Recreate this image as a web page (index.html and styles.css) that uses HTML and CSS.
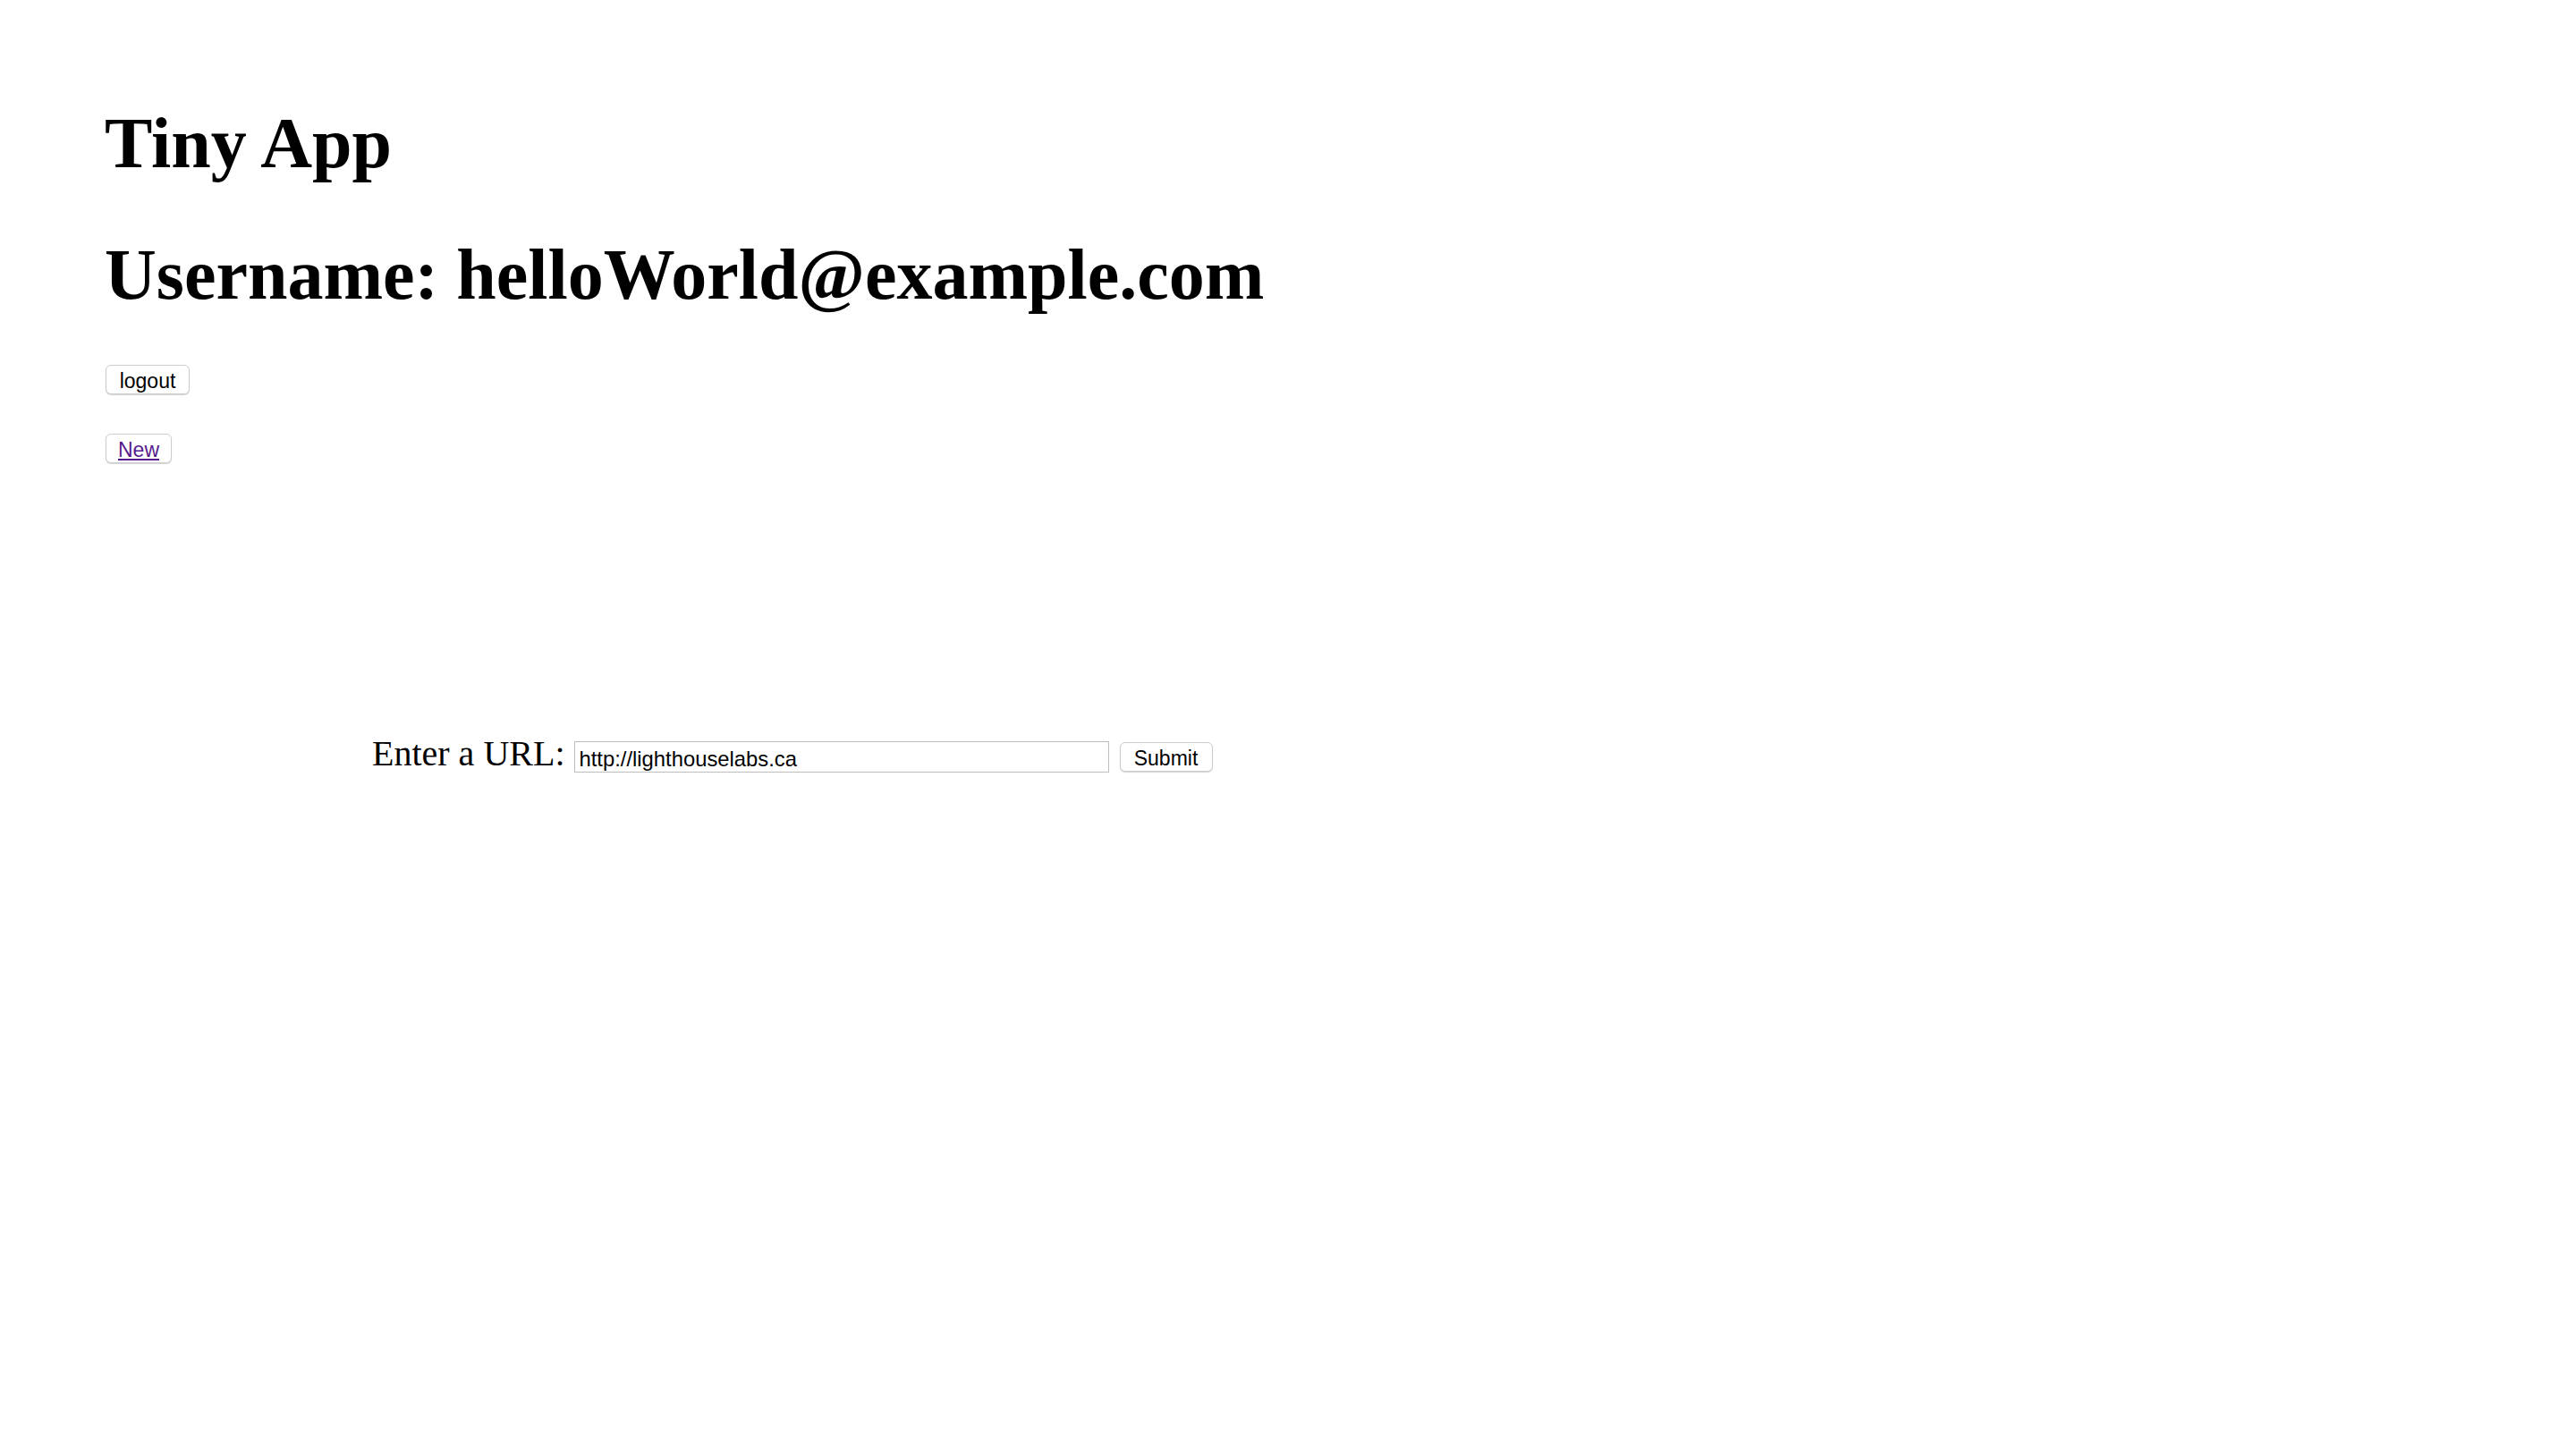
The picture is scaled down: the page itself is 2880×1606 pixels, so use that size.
FILE: index.html
```html
<!DOCTYPE html>
<html>
<head>
<meta charset="utf-8">
<title>Tiny App</title>
<link rel="stylesheet" href="styles.css">
</head>
<body>
<div class="page">
  <h1 class="title">Tiny App</h1>
  <h1 class="title user">Username: helloWorld@example.com</h1>
  <form class="logout-form">
    <button type="button" class="btn btn-logout">logout</button>
  </form>
  <div class="new-row">
    <button type="button" class="btn btn-new"><a href="#" class="new-link">New</a></button>
  </div>
  <form class="url-form">
    <span class="url-label">Enter a URL:</span>
    <input class="url-input" type="text" value="http://lighthouselabs.ca">
    <button type="button" class="btn btn-submit">Submit</button>
  </form>
</div>
</body>
</html>
```
FILE: styles.css
```css
html, body {
  margin: 0;
  padding: 0;
  background: #ffffff;
}
body {
  font-family: "Liberation Serif", "Times New Roman", serif;
  font-size: 40px;
  color: #000;
}
.page {
  padding: 114px 0 0 117px;
}
.title {
  margin: 0;
  font-size: 80px;
  font-weight: bold;
  line-height: 93px;
}
.user {
  margin-top: 54px;
}
.logout-form {
  margin: 54px 0 0 1px;
  display: flex;
}
.btn {
  box-sizing: border-box;
  height: 33px;
  padding: 3px 0 0 0;
  margin: 0;
  font-family: "Liberation Sans", Arial, sans-serif;
  font-size: 23px;
  line-height: 28px;
  color: #000;
  background: #ffffff;
  border: 1px solid #cdcdcd;
  border-radius: 6px;
  box-shadow: 0 1px 1px rgba(0, 0, 0, 0.18);
  text-align: center;
}
.btn-logout {
  width: 94px;
}
.new-row {
  margin: 44px 0 0 1px;
  display: flex;
}
.btn-new {
  width: 74px;
}
.new-link {
  color: #551a8b;
  text-decoration: underline;
}
.url-form {
  margin: 302px 0 0 299px;
  display: flex;
  align-items: flex-start;
}
.url-label {
  line-height: 46px;
  font-size: 40px;
}
.url-input {
  box-sizing: border-box;
  width: 598px;
  height: 35px;
  margin: 9px 0 0 10px;
  padding: 4px 5px 0 5px;
  font-family: "Liberation Sans", Arial, sans-serif;
  font-size: 23.8px;
  color: #000;
  border: 1px solid #bdbdbd;
  border-radius: 0;
  outline: none;
  background: #fff;
}
.btn-submit {
  width: 104px;
  margin: 10px 0 0 12px;
}
```
